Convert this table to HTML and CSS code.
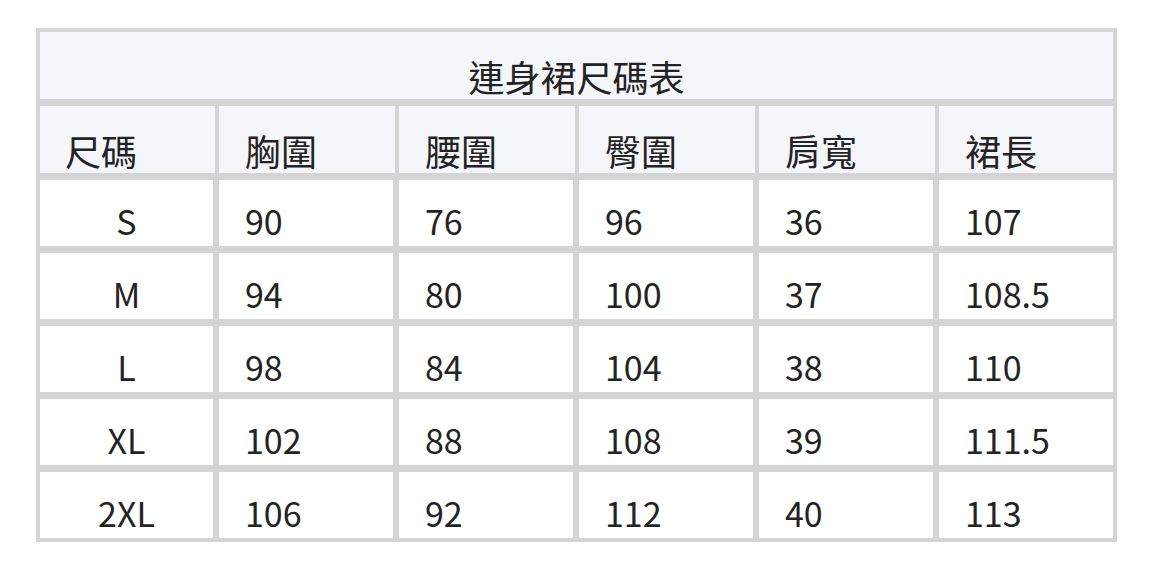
FILE: index.html
```html
<!DOCTYPE html>
<html lang="zh-Hant">
<head>
<meta charset="utf-8">
<title>連身裙尺碼表</title>
<link rel="stylesheet" href="styles.css">
</head>
<body>
<div class="chart">
  <div class="title">連身裙尺碼表</div>
  <div class="row head">
    <div class="cell">尺碼</div>
    <div class="cell">胸圍</div>
    <div class="cell">腰圍</div>
    <div class="cell">臀圍</div>
    <div class="cell">肩寬</div>
    <div class="cell">裙長</div>
  </div>
  <div class="row body">
    <div class="cell size">S</div><div class="cell">90</div><div class="cell">76</div><div class="cell">96</div><div class="cell">36</div><div class="cell">107</div>
  </div>
  <div class="row body">
    <div class="cell size">M</div><div class="cell">94</div><div class="cell">80</div><div class="cell">100</div><div class="cell">37</div><div class="cell">108.5</div>
  </div>
  <div class="row body">
    <div class="cell size">L</div><div class="cell">98</div><div class="cell">84</div><div class="cell">104</div><div class="cell">38</div><div class="cell">110</div>
  </div>
  <div class="row body">
    <div class="cell size">XL</div><div class="cell">102</div><div class="cell">88</div><div class="cell">108</div><div class="cell">39</div><div class="cell">111.5</div>
  </div>
  <div class="row body">
    <div class="cell size">2XL</div><div class="cell">106</div><div class="cell">92</div><div class="cell">112</div><div class="cell">40</div><div class="cell">113</div>
  </div>
</div>
</body>
</html>
```

FILE: styles.css
```css
html, body {
  margin: 0;
  padding: 0;
  background: #ffffff;
}
body {
  padding: 28px 0 0 36px;
  font-family: "Noto Sans CJK TC", "Noto Sans CJK SC", sans-serif;
  color: #232323;
}
.chart {
  width: 1073px;
  background: #d4d4d4;
  padding: 4px;
  display: flex;
  flex-direction: column;
  gap: 7px;
}
.title {
  height: 67px;
  box-sizing: border-box;
  padding-top: 27px;
  background: #f5f6fa;
  text-align: center;
  font-size: 36px;
  line-height: 34px;
}
.row {
  display: grid;
}
.head {
  grid-template-columns: 175px 176px 176px 176px 176px 174px;
  column-gap: 4px;
}
.body {
  grid-template-columns: 173px 174px 174px 174px 174px 174px;
  column-gap: 6px;
}
.cell {
  box-sizing: border-box;
  padding-left: 26px;
  font-size: 36px;
  line-height: 34px;
}
.head .cell {
  height: 67px;
  padding-top: 27px;
  background: #f5f6fa;
}
.head .cell:first-child {
  padding-left: 25px;
}
.body .cell {
  height: 66px;
  padding-top: 24px;
  background: #ffffff;
  font-size: 34px;
}
.body .size {
  padding-left: 0;
  text-align: center;
}
```
